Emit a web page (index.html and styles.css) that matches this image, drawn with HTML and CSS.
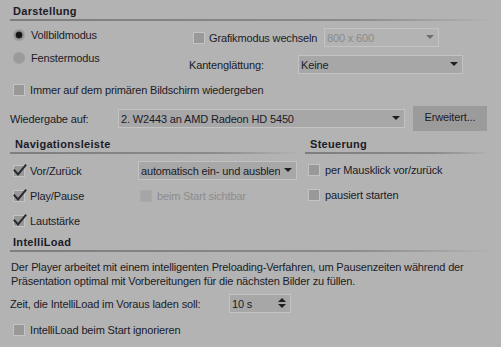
FILE: index.html
```html
<!DOCTYPE html>
<html lang="de">
<head>
<meta charset="utf-8">
<title>Darstellung</title>
<link rel="stylesheet" href="styles.css">
</head>
<body>
<div class="page">
  <div class="sec-head first"><span class="sec-title">Darstellung</span></div>
  <div class="sec-line"></div>

  <div class="display-top">
    <div class="modes">
      <div class="opt"><span class="radio checked"></span><span>Vollbildmodus</span></div>
      <div class="opt"><span class="radio"></span><span>Fenstermodus</span></div>
    </div>
    <div class="gfx">
      <div class="gfx-row1">
        <span class="gfx-label"><span class="cb"></span><span>Grafikmodus wechseln</span></span>
        <div class="select disabled w-res"><span class="sel-text">800 x 600</span><span class="arrow"></span></div>
      </div>
      <div class="gfx-row2">
        <span class="aa-label">Kantenglättung:</span>
        <div class="select w-aa"><span class="sel-text">Keine</span><span class="arrow"></span></div>
      </div>
    </div>
  </div>

  <div class="opt row-primary"><span class="cb"></span><span>Immer auf dem primären Bildschirm wiedergeben</span></div>

  <div class="row-output">
    <span class="out-label">Wiedergabe auf:</span>
    <div class="select w-out"><span class="sel-text">2. W2443 an AMD Radeon HD 5450</span><span class="arrow"></span></div>
    <div class="button">Erweitert...</div>
  </div>

  <div class="two-col">
    <div class="nav">
      <div class="sec-head nav-head"><span class="sec-title">Navigationsleiste</span></div>
      <div class="sec-line"></div>
      <div class="nav-grid">
        <div class="opt"><span class="cb"><svg class="check" viewBox="0 0 14 13"><polyline points="1.5,6.5 5,10.5 12.5,1.5"/></svg></span><span>Vor/Zurück</span></div>
        <div class="select w-nav"><span class="sel-text">automatisch ein- und ausblenden</span><span class="arrow"></span></div>
        <div class="opt"><span class="cb"><svg class="check" viewBox="0 0 14 13"><polyline points="1.5,6.5 5,10.5 12.5,1.5"/></svg></span><span>Play/Pause</span></div>
        <div class="opt disabled-opt"><span class="cb dis"></span><span>beim Start sichtbar</span></div>
        <div class="opt"><span class="cb"><svg class="check" viewBox="0 0 14 13"><polyline points="1.5,6.5 5,10.5 12.5,1.5"/></svg></span><span>Lautstärke</span></div>
      </div>
    </div>
    <div class="ctrl">
      <div class="sec-head ctrl-head"><span class="sec-title">Steuerung</span></div>
      <div class="sec-line"></div>
      <div class="ctrl-list">
        <div class="opt"><span class="cb"></span><span>per Mausklick vor/zurück</span></div>
        <div class="opt"><span class="cb"></span><span>pausiert starten</span></div>
      </div>
    </div>
  </div>

  <div class="sec-head il-head"><span class="sec-title">IntelliLoad</span></div>
  <div class="sec-line"></div>
  <p class="desc">Der Player arbeitet mit einem intelligenten Preloading-Verfahren, um Pausenzeiten während der Präsentation optimal mit Vorbereitungen für die nächsten Bilder zu füllen.</p>
  <div class="row-time">
    <span class="time-label">Zeit, die IntelliLoad im Voraus laden soll:</span>
    <div class="spinner"><span class="sel-text">10 s</span><span class="spin-arrows"><span class="up"></span><span class="down"></span></span></div>
  </div>
  <div class="opt row-ignore"><span class="cb"></span><span>IntelliLoad beim Start ignorieren</span></div>
</div>
</body>
</html>
```

FILE: styles.css
```css
html, body {
  margin: 0;
  padding: 0;
}
body {
  background: #b3b3b3;
  width: 501px;
  height: 347px;
  overflow: hidden;
  font-family: "Liberation Sans", Arial, sans-serif;
  font-size: 11px;
  letter-spacing: -0.15px;
  color: #1b1b27;
}
.page {
  padding-left: 10px;
}
.sec-head {
  height: 14px;
  line-height: 14px;
  padding-left: 3px;
}
.sec-head.first { margin-top: 4px; }
.sec-title {
  font-weight: bold;
  letter-spacing: 0.3px;
}
.sec-line {
  margin-top: 1px;
  height: 2px;
  width: 485px;
  background: linear-gradient(to right, #7e7e7e 0%, #8a8a8a 70%, rgba(179,179,179,0) 100%);
}
.opt {
  display: flex;
  align-items: center;
  height: 18px;
  white-space: nowrap;
}
.radio {
  width: 12px;
  height: 12px;
  border-radius: 50%;
  background: #9a9a9a;
  box-shadow: inset 0 0 0 1px #a4a4a4;
  margin-right: 6px;
  position: relative;
  flex: none;
}
.radio.checked::after {
  content: "";
  position: absolute;
  left: 3px;
  top: 3px;
  width: 6px;
  height: 6px;
  border-radius: 50%;
  background: #141414;
  box-shadow: 0 0 1px 0.5px #3a3a3a;
}
.cb {
  width: 10px;
  height: 10px;
  background: #999999;
  border: 1px solid #c4c4c4;
  margin-right: 5px;
  position: relative;
  flex: none;
}
.cb.dis {
  background: #a5a5a5;
  border-color: #aaaaaa;
}
.check {
  position: absolute;
  left: -1px;
  top: -2px;
  width: 14px;
  height: 13px;
  overflow: visible;
}
.check polyline {
  fill: none;
  stroke: #2a2a2e;
  stroke-width: 2;
  stroke-linecap: square;
}
.display-top {
  display: flex;
  align-items: flex-start;
}
.modes {
  width: 176px;
  padding-left: 3px;
  padding-top: 5px;
  display: flex;
  flex-direction: column;
  gap: 5px;
}
.gfx {
  padding-top: 7px;
  display: flex;
  flex-direction: column;
  gap: 8px;
}
.gfx-row1, .gfx-row2, .row-output, .row-time {
  display: flex;
  align-items: center;
}
.gfx-label {
  display: flex;
  align-items: center;
  width: 131px;
  padding-left: 4px;
  white-space: nowrap;
}
.gfx-label .cb { margin-right: 4px; }
.aa-label { width: 109px; }
.select {
  height: 17px;
  border: 1px solid #c3c3c3;
  background: #a7a7a7;
  position: relative;
  display: flex;
  align-items: center;
  overflow: hidden;
  flex: none;
}
.select.disabled {
  background: #b3b3b3;
  color: #8a8a8a;
}
.sel-text {
  padding-left: 2px;
  white-space: nowrap;
  overflow: hidden;
  flex: 1;
  min-width: 0;
  margin-right: 16px;
}
.arrow {
  position: absolute;
  right: 4px;
  top: 6px;
  width: 0;
  height: 0;
  border-left: 4px solid transparent;
  border-right: 4px solid transparent;
  border-top: 4px solid #1e1e1e;
}
.select.disabled .arrow { border-top-color: #6e6e6e; }
.w-res { width: 113px; }
.w-aa { width: 163px; }
.w-out { width: 285px; }
.w-nav { width: 157px; }
.row-primary {
  margin-top: 7px;
  padding-left: 3px;
}
.row-output {
  margin-top: 7px;
  height: 25px;
}
.out-label { width: 108px; }
.button {
  margin-left: 8px;
  width: 74px;
  height: 25px;
  line-height: 23px;
  background: #9b9b9b;
  text-align: center;
}
.two-col {
  display: flex;
}
.nav { width: 295px; }
.nav .sec-line { width: 290px; }
.ctrl .sec-line { width: 185px; }
.nav-head { margin-top: 6px; padding-left: 5px; }
.ctrl-head { margin-top: 6px; padding-left: 5px; }
.nav-grid {
  margin-top: 7px;
  padding-left: 3px;
  display: grid;
  grid-template-columns: 125px 159px;
  row-gap: 7px;
  align-items: center;
}
.disabled-opt {
  color: #8c8c8c;
  padding-left: 2px;
}
.ctrl-list {
  margin-top: 7px;
  padding-left: 3px;
  display: flex;
  flex-direction: column;
  gap: 7px;
}
.il-head { margin-top: 5px; }
.desc {
  margin: 8px 0 0 1px;
  line-height: 14px;
  width: 480px;
}
.row-time {
  margin-top: 6px;
  height: 19px;
}
.time-label { width: 219px; }
.spinner {
  width: 60px;
  height: 17px;
  border: 1px solid #c3c3c3;
  background: #a7a7a7;
  display: flex;
  align-items: center;
  position: relative;
}
.spin-arrows {
  position: absolute;
  right: 4px;
  top: 3px;
  display: flex;
  flex-direction: column;
  gap: 2px;
}
.spin-arrows .up {
  width: 0; height: 0;
  border-left: 4px solid transparent;
  border-right: 4px solid transparent;
  border-bottom: 4px solid #1e1e1e;
}
.spin-arrows .down {
  width: 0; height: 0;
  border-left: 4px solid transparent;
  border-right: 4px solid transparent;
  border-top: 4px solid #1e1e1e;
}
.row-ignore {
  margin-top: 8px;
  padding-left: 3px;
}
```
